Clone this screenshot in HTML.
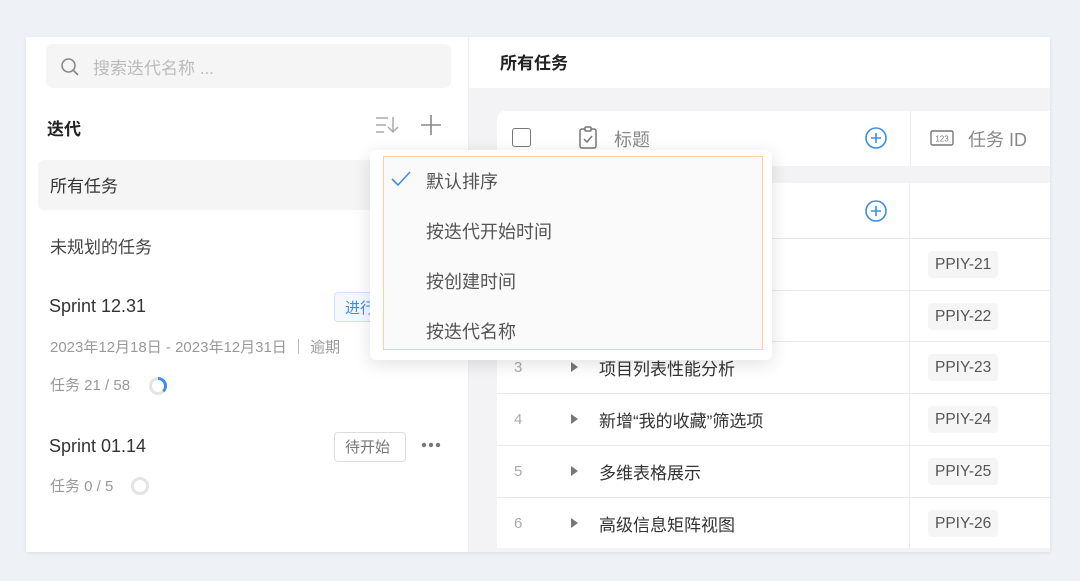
<!DOCTYPE html>
<html><head><meta charset="utf-8"><style>
*{margin:0;padding:0;box-sizing:border-box}
body{width:1080px;height:581px;background:#eef2f7;font-family:"Liberation Sans","Noto Sans CJK SC",sans-serif;position:relative;overflow:hidden;color:#333}
.a{position:absolute}
.card{left:26px;top:37px;width:1024px;height:515px;background:#fff;box-shadow:0 1px 4px rgba(0,0,0,.08);overflow:hidden}
.t{position:absolute;white-space:nowrap}
.row{position:absolute;left:497px;width:553px;height:52px;border-top:1px solid #e8e8ee;background:#fff}
.row .n{position:absolute;left:17px;top:17px;font-size:15px;color:#aaa}
.row .tri{position:absolute;left:74px;top:20px;width:0;height:0;border-left:7px solid #777;border-top:5px solid transparent;border-bottom:5px solid transparent}
.row .ti{position:absolute;left:102px;top:13px;font-size:17px;color:#333}
.row .id{position:absolute;left:431px;top:12px;height:27px;padding:0 7px;line-height:27px;background:#f5f5f5;border-radius:4px;font-size:15.5px;color:#555}
.row .dv{position:absolute;left:412px;top:0;bottom:0;width:1px;background:#ececf0}
</style></head><body>
<div class="a card"></div>
<!-- left -->
<div class="a" style="left:46px;top:44px;width:405px;height:44px;background:#f5f5f5;border-radius:7px"></div>
<svg class="a" style="left:60px;top:57px" width="20" height="20" viewBox="0 0 20 20"><circle cx="8.5" cy="8.5" r="6.5" fill="none" stroke="#888" stroke-width="1.6"/><path d="M13.5 13.5L18 18" stroke="#888" stroke-width="1.6"/></svg>
<div class="t" style="left:93px;top:54px;font-size:17px;color:#bbb">搜索迭代名称 ...</div>
<div class="t" style="left:47px;top:115px;font-size:17px;font-weight:bold;color:#222">迭代</div>
<svg class="a" style="left:375px;top:115px" width="26" height="20" viewBox="0 0 26 20"><path d="M1 3h12M1 10h10M1 17h8M18 2v15M13 12l5 5 5-5" fill="none" stroke="#aaa" stroke-width="1.5"/></svg>
<svg class="a" style="left:420px;top:114px" width="22" height="22" viewBox="0 0 22 22"><path d="M11 1v20M1 11h20" stroke="#888" stroke-width="1.6"/></svg>
<div class="a" style="left:38px;top:160px;width:430px;height:50px;background:#f5f5f5;border-radius:6px"></div>
<div class="t" style="left:50px;top:172px;font-size:17px;color:#333">所有任务</div>
<div class="t" style="left:50px;top:233px;font-size:17px;color:#444">未规划的任务</div>
<div class="t" style="left:49px;top:296px;font-size:18px;color:#333">Sprint 12.31</div>
<div class="a" style="left:334px;top:292px;width:60px;height:30px;border:1px solid #cfe2fb;border-radius:4px;background:#f5f9ff"></div>
<div class="t" style="left:345px;top:297px;font-size:15px;color:#3a8ee6">进行</div>
<div class="t" style="left:50px;top:336px;font-size:15px;color:#999">2023年12月18日 - 2023年12月31日 ｜ 逾期</div>
<div class="t" style="left:50px;top:374px;font-size:15px;color:#999">任务 21 / 58</div>
<svg class="a" style="left:148px;top:376px" width="20" height="20" viewBox="0 0 20 20"><circle cx="10" cy="10" r="7.5" fill="none" stroke="#e4e4e4" stroke-width="3"/><path d="M10 2.5A7.5 7.5 0 0 1 15.3 15.3" fill="none" stroke="#3a8ee6" stroke-width="3"/></svg>
<div class="t" style="left:49px;top:436px;font-size:18px;color:#333">Sprint 01.14</div>
<div class="a" style="left:334px;top:432px;width:72px;height:30px;border:1px solid #ddd;border-radius:4px"></div>
<div class="t" style="left:345px;top:436px;font-size:15px;color:#777">待开始</div>
<svg class="a" style="left:421px;top:442px" width="20" height="6" viewBox="0 0 20 6"><circle cx="3" cy="3" r="2.2" fill="#777"/><circle cx="10" cy="3" r="2.2" fill="#777"/><circle cx="17" cy="3" r="2.2" fill="#777"/></svg>
<div class="t" style="left:50px;top:475px;font-size:15px;color:#999">任务 0 / 5</div>
<svg class="a" style="left:130px;top:476px" width="20" height="20" viewBox="0 0 20 20"><circle cx="10" cy="10" r="7.5" fill="none" stroke="#e4e4e4" stroke-width="3"/></svg>
<!-- right -->
<div class="a" style="left:468px;top:37px;width:1px;height:515px;background:#eeeef2"></div>
<div class="t" style="left:500px;top:49px;font-size:17px;font-weight:bold;color:#222">所有任务</div>
<div class="a" style="left:469px;top:88px;width:581px;height:464px;background:#f3f3f5"></div>
<div class="a" style="left:497px;top:111px;width:553px;height:55px;background:#fff;border-radius:8px 0 0 0"></div>
<div class="a" style="left:512px;top:128px;width:19px;height:19px;border:1.6px solid #777;border-radius:3px"></div>
<svg class="a" style="left:578px;top:126px" width="22" height="24" viewBox="0 0 22 24"><rect x="2" y="3" width="16" height="19" rx="2" fill="none" stroke="#777" stroke-width="1.5"/><rect x="7" y="1" width="6" height="4" rx="1" fill="#fff" stroke="#777" stroke-width="1.5"/><path d="M6 13l3 3 5-6" fill="none" stroke="#777" stroke-width="1.5"/></svg>
<div class="t" style="left:614px;top:126px;font-size:18px;color:#888">标题</div>
<svg class="a" style="left:864px;top:126px" width="24" height="24" viewBox="0 0 24 24"><circle cx="12" cy="12" r="10" fill="none" stroke="#3a8ee6" stroke-width="1.6"/><path d="M12 7v10M7 12h10" stroke="#3a8ee6" stroke-width="1.6"/></svg>
<div class="a" style="left:910px;top:111px;width:1px;height:55px;background:#ececf0"></div>
<svg class="a" style="left:930px;top:130px" width="24" height="16" viewBox="0 0 24 16"><rect x="1" y="1" width="22" height="14" rx="1.5" fill="none" stroke="#777" stroke-width="1.4"/><text x="12" y="11.5" font-size="8" text-anchor="middle" fill="#777" font-family="Liberation Sans">123</text></svg>
<div class="t" style="left:968px;top:126px;font-size:18px;color:#888">任务 ID</div>
<div class="row" style="top:183px;height:56px;border-top:none"><div class="dv"></div></div>
<svg class="a" style="left:864px;top:199px" width="24" height="24" viewBox="0 0 24 24"><circle cx="12" cy="12" r="10" fill="none" stroke="#3a8ee6" stroke-width="1.6"/><path d="M12 7v10M7 12h10" stroke="#3a8ee6" stroke-width="1.6"/></svg>
<div class="row" style="top:238px"><div class="dv"></div><div class="id">PPIY-21</div></div>
<div class="row" style="top:290px"><div class="dv"></div><div class="id">PPIY-22</div></div>
<div class="row" style="top:341px"><div class="dv"></div><div class="n">3</div><div class="tri"></div><div class="ti">项目列表性能分析</div><div class="id">PPIY-23</div></div>
<div class="row" style="top:393px"><div class="dv"></div><div class="n">4</div><div class="tri"></div><div class="ti">新增“我的收藏”筛选项</div><div class="id">PPIY-24</div></div>
<div class="row" style="top:445px"><div class="dv"></div><div class="n">5</div><div class="tri"></div><div class="ti">多维表格展示</div><div class="id">PPIY-25</div></div>
<div class="row" style="top:497px;height:51px"><div class="dv"></div><div class="n">6</div><div class="tri"></div><div class="ti">高级信息矩阵视图</div><div class="id">PPIY-26</div></div>
<!-- menu -->
<div class="a" style="left:370px;top:150px;width:402px;height:210px;background:#fff;border-radius:6px;box-shadow:0 4px 18px rgba(0,0,0,.12)"></div>
<div class="a" style="left:383px;top:156px;width:380px;height:194px;background:#fafafa;border:1.5px solid #f6d2a8"></div>
<svg class="a" style="left:390px;top:170px" width="22" height="18" viewBox="0 0 22 18"><path d="M2 9l6 6L20 2" fill="none" stroke="#3a8ee6" stroke-width="1.6"/></svg>
<div class="t" style="left:426px;top:168px;font-size:18px;color:#555">默认排序</div>
<div class="t" style="left:426px;top:218px;font-size:18px;color:#555">按迭代开始时间</div>
<div class="t" style="left:426px;top:268px;font-size:18px;color:#555">按创建时间</div>
<div class="t" style="left:426px;top:318px;font-size:18px;color:#555">按迭代名称</div>
</body></html>
